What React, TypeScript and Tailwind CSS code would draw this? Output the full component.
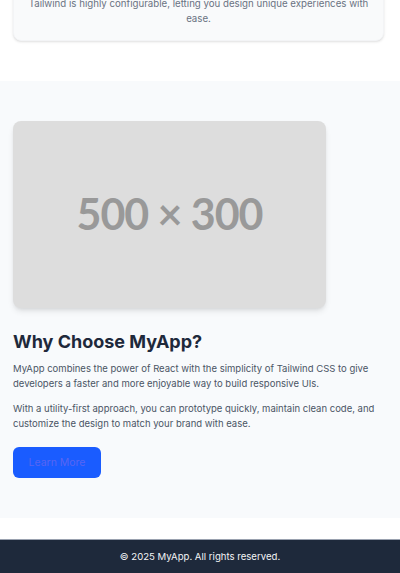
import React from 'react';

const Placeholder: React.FC = () => (
  <div className="w-[313px] h-[187px] rounded-lg bg-[#dddddd] shadow-md flex items-center justify-center">
    <span className="font-['Lato',sans-serif] font-bold text-[43px] text-[#999999] tracking-tight">
      500 × 300
    </span>
  </div>
);

export default function App() {
  return (
    <div className="min-h-screen bg-white font-['Inter',sans-serif] overflow-hidden">
      {/* feature card (scrolled) */}
      <section className="px-[13px] pb-10">
        <div className="-mt-[21px] rounded-lg bg-[#f9fafb] border border-gray-100 shadow-sm px-3 pt-4 pb-[14px] w-[371px]">
          <p className="text-[9.7px] leading-[15px] text-gray-500 text-center">
            Tailwind is highly configurable, letting you design unique experiences with ease.
          </p>
        </div>
      </section>

      {/* about */}
      <section className="bg-[#f8fafc] px-[13px] py-10">
        <Placeholder />
        <h2 className="mt-5 text-[18px] leading-7 font-bold text-[#1e293b]">Why Choose MyApp?</h2>
        <p className="mt-[5px] text-[9.5px] leading-[15px] text-gray-600">
          MyApp combines the power of React with the simplicity of Tailwind CSS to give developers a faster and more
          enjoyable way to build responsive UIs.
        </p>
        <p className="mt-[10px] text-[9.5px] leading-[15px] text-gray-600">
          With a utility-first approach, you can prototype quickly, maintain clean code, and customize the design to
          match your brand with ease.
        </p>
        <button className="mt-4 h-[31px] w-[88px] rounded-md bg-[#1a5cff] text-[10.5px] text-[#5865f2]">
          Learn More
        </button>
      </section>

      <div className="h-[21px]" />

      <footer className="h-[35px] bg-[#1e293b] border-t border-gray-400 flex items-center justify-center">
        <p className="text-[9.6px] text-gray-100">© 2025 MyApp. All rights reserved.</p>
      </footer>
    </div>
  );
}
